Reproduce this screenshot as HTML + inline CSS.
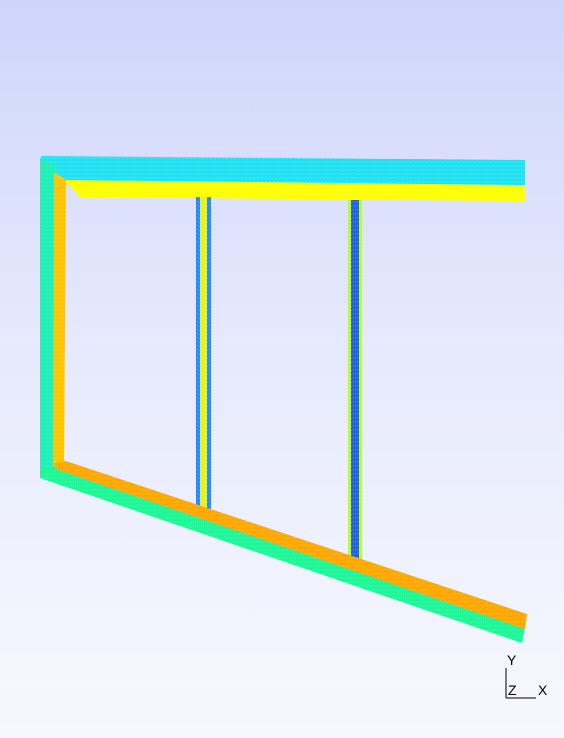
<!DOCTYPE html>
<html><head><style>
html,body{margin:0;padding:0;}
body{width:564px;height:738px;background:linear-gradient(#cdd5fb 0%,#e6e9fc 45%,#f7f8fe 100%);overflow:hidden;}
svg{position:absolute;left:0;top:0;}
text{font-family:"Liberation Sans",sans-serif;font-size:14px;fill:#000;}
</style></head><body>
<svg width="564" height="738" viewBox="0 0 564 738">
<defs>
<pattern id="dots" width="4" height="4" patternUnits="userSpaceOnUse">
<rect x="1" y="1" width="1" height="1" fill="#fff" opacity="0.5"/>
<rect x="3" y="2" width="1" height="1" fill="#fff" opacity="0.4"/>
</pattern>
<clipPath id="c">
<polygon points="41,156 525,160 525,201 80,197 66,180 66,461 527,614 522,643 40,478"/>
<rect x="196" y="197" width="15" height="318"/>
<rect x="348" y="200" width="14" height="362"/>
</clipPath>
</defs>
<polygon points="41,156 525,160 525,186 70,183 54,172 41,172" fill="#1fe3f3"/>
<polygon points="64,180 525,185 525,201 80,197" fill="#ffff00"/>
<rect x="196" y="197" width="15" height="320" fill="#1e8cff"/>
<rect x="200" y="197" width="7" height="320" fill="#e8f020"/>
<rect x="348" y="200" width="14" height="364" fill="#b8ff20"/>
<rect x="351" y="200" width="8" height="364" fill="#2060e8"/>
<polygon points="40,158 56,165 56,470 40,478" fill="#1ef0b8"/>
<polygon points="54,172 66,180 64,467 53,467" fill="#ffc400"/>
<polygon points="40,468 56,466 525,628 522,643 40,478" fill="#1ef797"/>
<polygon points="54,463 66,461 527,614 525,629 56,469" fill="#ffa800"/>
<rect x="0" y="150" width="564" height="500" fill="url(#dots)" opacity="0.6" clip-path="url(#c)"/>
<line x1="506" y1="668" x2="506" y2="698" stroke="#000" stroke-width="1"/>
<line x1="506" y1="698" x2="536" y2="698" stroke="#000" stroke-width="1"/>
<text x="507" y="665">Y</text>
<text x="508" y="695">Z</text>
<text x="538" y="695">X</text>
</svg>
</body></html>
